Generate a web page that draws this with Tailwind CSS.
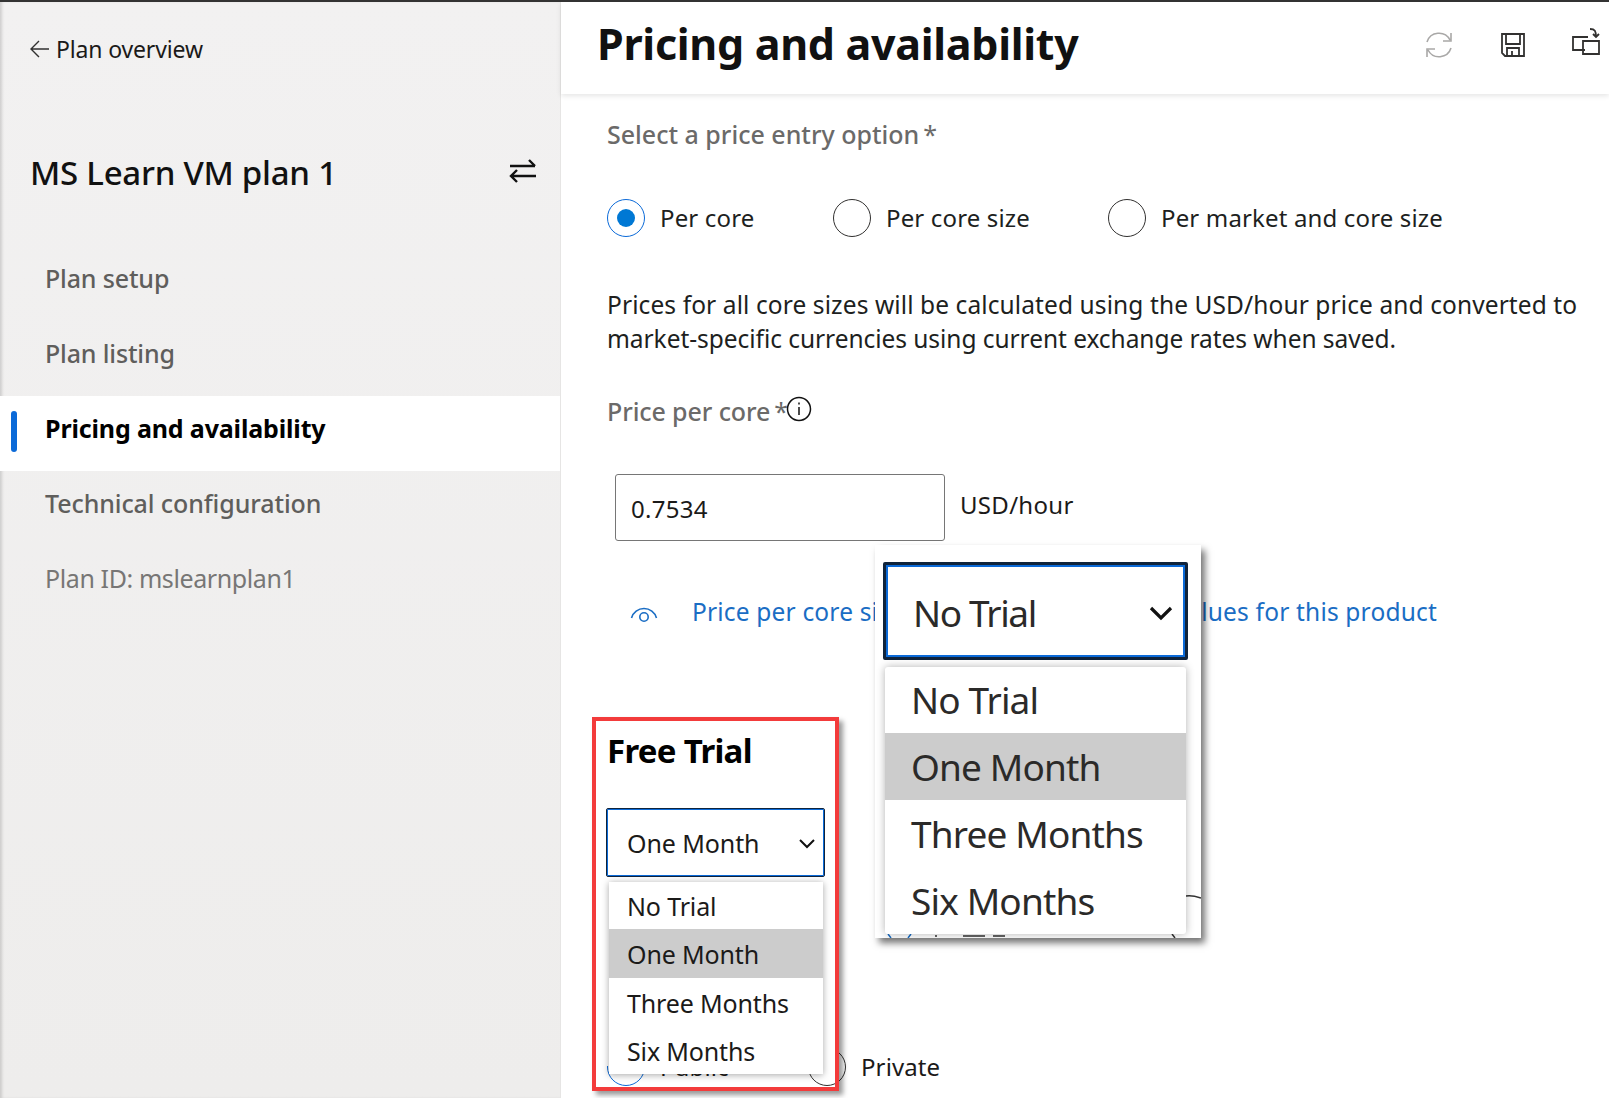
<!DOCTYPE html>
<html lang="en">
<head>
    <meta charset="UTF-8">
    <title>Pricing and availability</title>
    <script src="https://cdn.jsdelivr.net/npm/@tailwindcss/browser@4"></script>
</head>
<body class="bg-white font-['Noto_Sans',sans-serif] text-[#1b1a19]">
    <div class="relative h-[1098px] w-[1609px] overflow-hidden border-t-2 border-[#333333] flex">
        <!-- Sidebar -->
        <aside class="w-[561px] shrink-0 h-full bg-gradient-to-b from-[#f2f1f1] to-[#eeedec] border-r border-[#e6e5e4] shadow-[inset_3px_0_3px_-1px_rgba(0,0,0,0.14)]">
            <div class="h-[94px] pl-[29px] pt-[30px] flex items-start">
                <a class="flex items-center gap-[6px] h-[34px] text-[23px] tracking-[-0.15px] text-[#1b1a19]">
                    <svg class="w-[21px] h-[20px]" viewBox="0 0 21 20" fill="none" stroke="#323130" stroke-width="1.4"><path d="M20 10H2M10 2l-8 8 8 8"/></svg>
                    Plan overview
                </a>
            </div>
            <div class="flex items-center justify-between pl-[30px] pr-[23px] h-[80px] mt-[37px]">
                <h2 class="text-[33px] font-medium tracking-[-0.25px] text-[#111111]">MS Learn VM plan 1</h2>
                <svg class="w-[28px] h-[24px] -mt-[4px]" viewBox="0 0 28 24" fill="none" stroke="#111111" stroke-width="2.4"><path d="M1 7h25M20 1l6 6M27 17H2M8 11l-6 6 6 6"/></svg>
            </div>
            <nav class="mt-[33px] flex flex-col">
                <div class="h-[75px] pl-[45px] pb-[10px] flex items-center text-[25px] font-medium tracking-[-0.15px] text-[#5f5e5c]">Plan setup</div>
                <div class="h-[75px] pl-[45px] pb-[10px] flex items-center text-[25px] font-medium tracking-[-0.15px] text-[#5f5e5c]">Plan listing</div>
                <div class="relative h-[75px] pl-[45px] pb-[10px] flex items-center bg-white text-[25px] font-bold tracking-[-0.15px] text-[#000000]">
                    <span class="absolute left-[11px] top-[15px] w-[6px] h-[41px] rounded-[3px] bg-[#0b6ad8]"></span>
                    Pricing and availability
                </div>
                <div class="h-[75px] pl-[45px] pb-[10px] flex items-center text-[25px] font-medium tracking-[-0.1px] text-[#5f5e5c]">Technical configuration</div>
                <div class="h-[75px] pl-[45px] pb-[10px] flex items-center text-[25px] tracking-[-0.4px] text-[#777675]">Plan ID: mslearnplan1</div>
            </nav>
        </aside>

        <!-- Main -->
        <main class="flex-1 min-w-0">
            <header class="h-[92px] pl-[36px] pr-[8px] pb-[6px] flex items-center justify-between shadow-[0_2px_5px_rgba(0,0,0,0.1)]">
                <h1 class="-mt-[2px] text-[43px] font-bold tracking-[-0.3px] text-[#111111]">Pricing and availability</h1>
                <div class="flex items-center gap-[45px]">
                    <svg class="w-[30px] h-[30px]" viewBox="0 0 30 30" fill="none" stroke="#a9a8a7" stroke-width="1.6"><path d="M3 12A12.5 12.5 0 0 1 26 10M27 3v8h-8M27 18A12.5 12.5 0 0 1 4 20M3 27v-8h8"/></svg>
                    <svg class="w-[26px] h-[26px] ml-[1px]" viewBox="0 0 26 26" fill="none" stroke="#323130" stroke-width="1.8"><path d="M2 2h22v22H5l-3-3zM6 2v10h14V2M7 24v-8h12v8M12 24v-5"/></svg>
                    <svg class="w-[30px] h-[28px] -mt-[6px]" viewBox="0 0 30 28" fill="none" stroke="#323130" stroke-width="1.8"><path d="M14 22H2V9h15M12 13h16v13H12zM19 1c5 0 6 2 6 8M22 6l3 3 3-3"/></svg>
                </div>
            </header>

            <div class="pl-[46px] pr-[20px]">
                <p class="mt-[22px] h-[36px] leading-[36px] text-[25px] font-medium text-[#6b6a69]">Select a price entry option<span class="ml-[4px] font-normal">*</span></p>

                <div class="mt-[47px] flex items-center h-[38px] text-[24px] tracking-[0.15px] text-[#201f1e]">
                    <span class="flex items-center justify-center w-[38px] h-[38px] rounded-full border border-[#0b6ad8]"><span class="w-[18px] h-[18px] rounded-full bg-[#0078d4]"></span></span>
                    <span class="ml-[15px] w-[173px]">Per core</span>
                    <span class="w-[38px] h-[38px] rounded-full border border-[#323130]"></span>
                    <span class="ml-[15px] w-[222px]">Per core size</span>
                    <span class="w-[38px] h-[38px] rounded-full border border-[#323130]"></span>
                    <span class="ml-[15px]">Per market and core size</span>
                </div>

                <p class="mt-[51px] text-[24.5px] leading-[34px] tracking-[0.1px] whitespace-nowrap text-[#201f1e]">Prices for all core sizes will be calculated using the USD/hour price and converted to<br><span class="tracking-[-0.05px]">market-specific currencies using current exchange rates when saved.</span></p>

                <div class="mt-[37px] flex items-start h-[36px] text-[25px] font-medium tracking-[-0.1px] text-[#6b6a69]">
                    <span class="leading-[36px]">Price per core</span>
                    <span class="ml-[4px] font-normal leading-[36px]">*</span>
                    <svg class="w-[26px] h-[26px] mt-[3px] -ml-[2px]" viewBox="0 0 26 26" fill="none" stroke="#111111" stroke-width="1.5"><circle cx="13" cy="13" r="11.5"/><path d="M13 11v8M13 6.5v2"/></svg>
                </div>

                <div class="mt-[45px] ml-[8px] flex items-start">
                    <div class="w-[330px] h-[67px] rounded-[3px] border border-[#767676] pl-[15px] flex items-center text-[24px] tracking-[0.3px] pt-[2px]">0.7534</div>
                    <span class="ml-[15px] mt-[13px] text-[24px] tracking-[0.3px]">USD/hour</span>
                </div>

                <div class="mt-[53px] ml-[23px] flex items-center h-[36px] text-[24.5px] tracking-[0.18px] text-[#1a6dc4]">
                    <svg class="w-[28px] h-[20px] mt-[4px]" viewBox="0 0 28 20" fill="none" stroke="#1a6dc4" stroke-width="1.6"><path d="M1.5 14A13 13 0 0 1 26.500 14"/><circle cx="14" cy="13" r="4.200"/></svg>
                    <span class="ml-[34px] whitespace-nowrap">Price per core size across market specific values for this product</span>
                </div>

                <div class="mt-[418px] flex items-center h-[38px] text-[24px] tracking-[0.1px]">
                    <span class="w-[38px] h-[38px] rounded-full border border-[#0b6ad8]"></span>
                    <span class="ml-[15px] w-[148px]">Public</span>
                    <span class="w-[38px] h-[38px] rounded-full border border-[#323130]"></span>
                    <span class="ml-[15px]">Private</span>
                </div>
            </div>
        </main>

        <!-- Large dropdown overlay -->
        <div class="absolute left-[875px] top-[543px] w-[326px] h-[393px] bg-white shadow-[4px_5px_7px_rgba(0,0,0,0.55)] overflow-hidden">
            <div class="absolute left-[8px] top-[17px] w-[305px] h-[98px] border-[3px] border-[#10243c] rounded-[2px] shadow-[inset_0_0_0_2px_#0b6ad8] pl-[27px] pt-[4px] flex items-center justify-between pr-[12px] text-[37px] tracking-[-1.400px] text-[#2b2a29]">
                No Trial
                <svg class="w-[24px] h-[16px]" viewBox="0 0 24 16" fill="none" stroke="#111111" stroke-width="3.200"><path d="M2 3l10 10L22 3"/></svg>
            </div>
            <!-- what peeks out behind the list -->
            <svg class="absolute left-0 top-[348px] w-[326px] h-[45px]" viewBox="0 0 326 45" fill="none" stroke-width="1.500">
                <path d="M311 3c5-1 9 0 15 2" stroke="#333333"/>
                <path d="M13 41l3 4M33 45l3-4" stroke="#1a6dc4"/>
                <path d="M297 41l3 4M60 43h2M88 43h22M118 43h12" stroke="#333333"/>
            </svg>
            <div class="absolute left-[10px] top-[122px] w-[301px] rounded-[3px] bg-white shadow-[0_0_8px_rgba(0,0,0,0.3)] text-[37px] tracking-[-0.85px] text-[#2b2a29]">
                <div class="h-[66px] pl-[26px] flex items-center">No Trial</div>
                <div class="h-[67px] pl-[26px] flex items-center bg-[#cccccc]">One Month</div>
                <div class="h-[67px] pl-[26px] flex items-center">Three Months</div>
                <div class="h-[67px] pl-[26px] flex items-center">Six Months</div>
            </div>
        </div>

        <!-- Highlighted Free Trial overlay -->
        <div class="absolute left-[592px] top-[715px] w-[247px] h-[374px] border-[4px] border-[#f33b3b] shadow-[4px_4px_5px_rgba(0,0,0,0.4)]">
            <div class="absolute left-[0px] top-[0px] w-[239px] h-[345px] bg-white"></div>
            <h3 class="absolute left-[11px] top-[8px] text-[33px] leading-[44px] font-bold tracking-[-0.7px] text-black">Free Trial</h3>
            <div class="absolute left-[10px] top-[87px] w-[219px] h-[69px] border border-[#10243c] rounded-[2px] shadow-[inset_0_0_0_1px_#0b6ad8] pl-[20px] pr-[8px] pt-[2px] flex items-center justify-between text-[25px] tracking-[-0.1px]">
                One Month
                <svg class="w-[18px] h-[12px]" viewBox="0 0 18 12" fill="none" stroke="#111111" stroke-width="2"><path d="M2 2l7 7 7-7"/></svg>
            </div>
            <div class="absolute left-[13px] top-[161px] w-[214px] bg-white shadow-[0_1px_7px_rgba(0,0,0,0.35)] text-[25px] tracking-[-0.15px]">
                <div class="h-[47px] pl-[18px] pt-[3px] flex items-center">No Trial</div>
                <div class="h-[49px] pl-[18px] pt-[3px] flex items-center bg-[#cccccc]">One Month</div>
                <div class="h-[48px] pl-[18px] pt-[3px] flex items-center">Three Months</div>
                <div class="h-[48px] pl-[18px] pt-[3px] flex items-center">Six Months</div>
            </div>
        </div>
    </div>
</body>
</html>
